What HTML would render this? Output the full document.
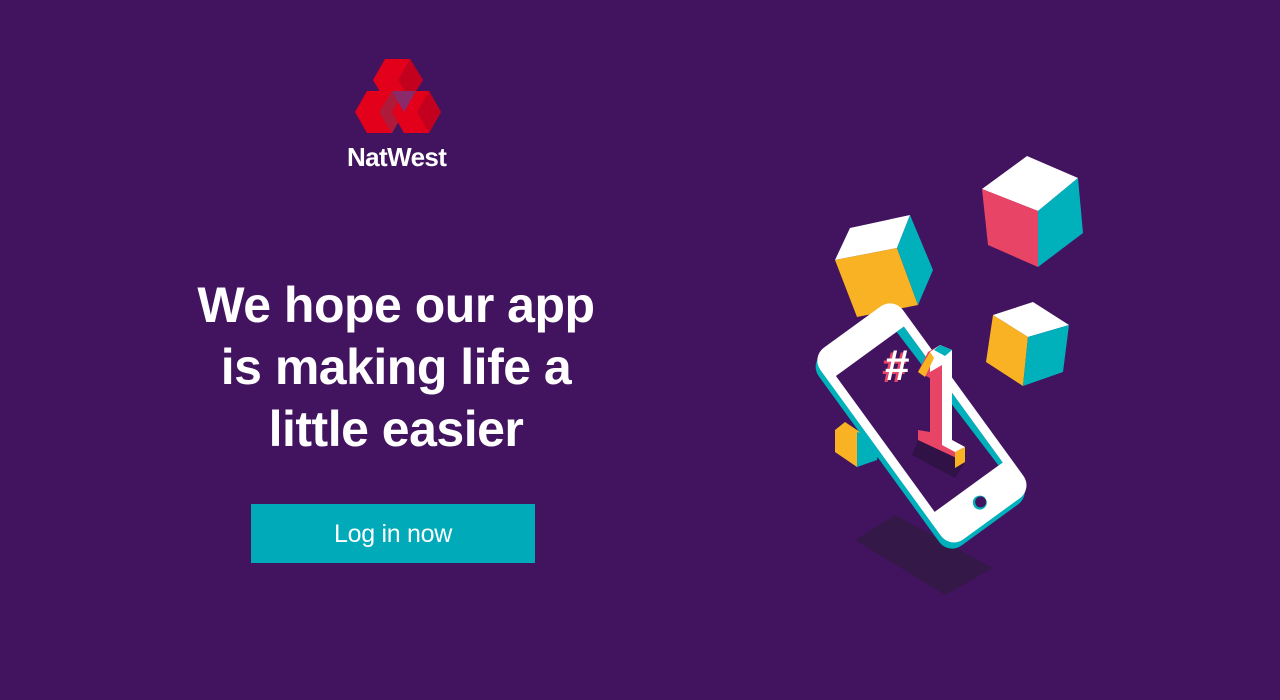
<!DOCTYPE html>
<html><head><meta charset="utf-8"><style>
html,body{margin:0;padding:0}
body{width:1280px;height:700px;background:#42145f;position:relative;overflow:hidden;font-family:"Liberation Sans",sans-serif}
.logo{position:absolute;left:340px;top:50px}
.brand{position:absolute;left:347px;top:142px;color:#fff;font-size:26px;font-weight:bold;letter-spacing:-0.6px}
h1{position:absolute;left:96px;width:600px;top:274px;margin:0;text-align:center;color:#fff;font-size:50px;line-height:62px;font-weight:bold;letter-spacing:-0.5px}
.btn{position:absolute;left:251px;top:504px;width:284px;height:59px;background:#00aab8;color:#fff;font-size:25px;text-align:center;line-height:61px;letter-spacing:-0.3px}
svg.ill{position:absolute;left:0;top:0}
</style></head><body>
<svg class="logo" width="120" height="100" viewBox="340 50 120 100">
<polygon points="373,80 385,59 410,59 423,80 410,100 385,100" fill="#e2001a"/>
<polygon points="398,80 410,59 423,80 410,100" fill="#c4001f"/>
<polygon points="355,112 367,91 392,91 404,112 392,133 367,133" fill="#e2001a"/>
<polygon points="379,112 392,91 404,112 392,133" fill="#b01a3a"/>
<polygon points="392,112 404,91 429,91 441,112 429,133 404,133" fill="#e2001a"/>
<polygon points="404,112 416,91 392,91" fill="#8a2a6a"/>
<polygon points="417,112 429,91 441,112 429,133" fill="#c4001f"/>
</svg>
<div class="brand">NatWest</div>
<h1>We hope our app<br>is making life a<br>little easier</h1>
<div class="btn">Log in now</div>
<svg class="ill" width="1280" height="700">
<polygon points="855,540 895,515 993,568 945,595" fill="#341848"/>
<polygon points="982,189 1027,156 1078,178 1038,211" fill="#fff"/>
<polygon points="982,189 1038,211 1038,267 988,245" fill="#e84466"/>
<polygon points="1038,211 1078,178 1083,233 1038,267" fill="#00b0bb"/>
<polygon points="835,260 850,228 910,215 897,248" fill="#fff"/>
<polygon points="835,260 897,248 918,305 857,317" fill="#f8b223"/>
<polygon points="897,248 910,215 933,270 918,305" fill="#00b0bb"/>
<polygon points="993,315 1033,302 1069,325 1028,337" fill="#fff"/>
<polygon points="993,315 1028,337 1023,386 986,362" fill="#f8b223"/>
<polygon points="1028,337 1069,325 1063,372 1023,386" fill="#00b0bb"/>
<polygon points="835,430 845,422 860,432 857,467 835,452" fill="#f8b223"/>
<polygon points="857,432 880,440 877,460 857,467" fill="#00b0bb"/>
<g transform="translate(811,357) rotate(-36)">
<rect x="-5" y="4" width="102" height="237" rx="16" fill="#00b0bb"/>
<rect x="0" y="0" width="102" height="237" rx="16" fill="#fff"/>
<rect x="9" y="30" width="84" height="168" fill="#42145f"/>
<polygon points="84,30 93,30 93,198 88,198" fill="#00b0bb"/>
<circle cx="51" cy="217" r="7" fill="#00b0bb"/>
<circle cx="52" cy="217" r="5.5" fill="#42145f"/>
</g>
<polygon points="918,440 965,462 955,478 912,455" fill="#2d1240" opacity="0.8"/>
<polygon points="918,372 928,352 940,345 952,350 952,440 965,447 965,462 918,440 918,430 930,432 930,378" fill="#e84466"/>
<polygon points="930,352 940,345 952,350 952,440 965,447 955,452 942,445 942,365 930,372" fill="#fff"/>
<polygon points="940,345 952,350 945,356 934,350" fill="#00b0bb"/>
<polygon points="918,372 930,352 934,358 925,377" fill="#f8b223"/>
<polygon points="955,452 965,447 965,462 955,468" fill="#f8b223"/>
<text x="882" y="382" font-family="Liberation Sans" font-weight="bold" font-size="44" fill="#e84466">#</text>
<text x="885" y="380" font-family="Liberation Sans" font-weight="bold" font-size="44" fill="#fff">#</text>
</svg>
</body></html>
